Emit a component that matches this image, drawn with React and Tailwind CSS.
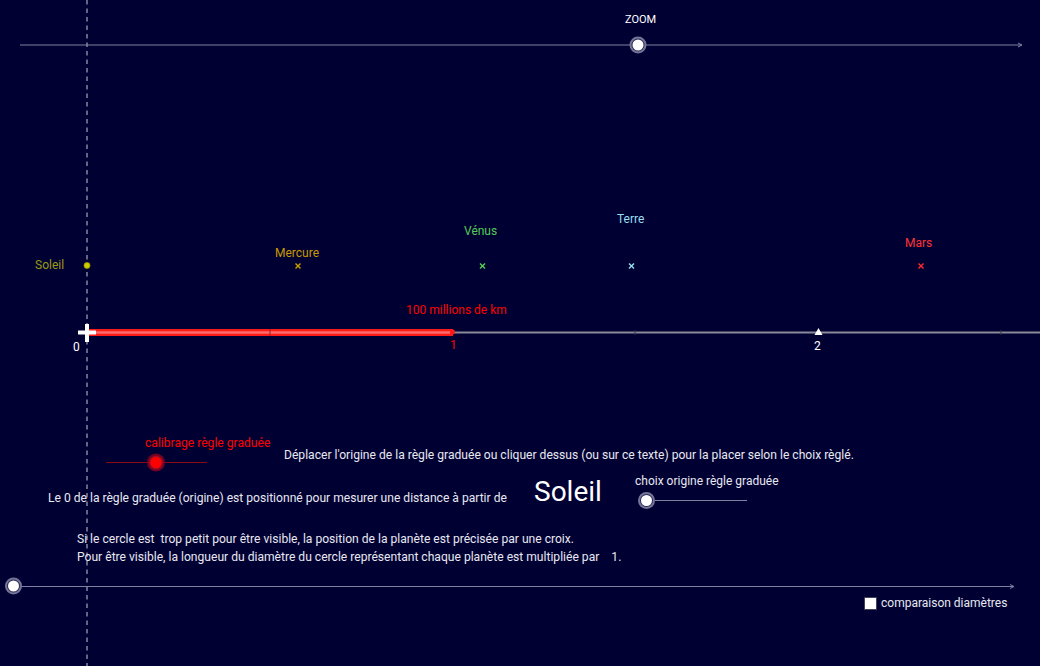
import React from "react";

function Knob({ cx, cy }) {
  return (
    <g>
      <circle cx={cx} cy={cy} r="8.5" fill="#75759a" />
      <circle cx={cx} cy={cy} r="6.5" fill="#2a2a55" />
      <circle cx={cx} cy={cy} r="5.5" fill="#ffffff" />
    </g>
  );
}

function Cross({ x, y, color }) {
  return (
    <g stroke={color} strokeWidth="1.4">
      <line x1={x - 2.5} y1={y - 2.5} x2={x + 2.5} y2={y + 2.5} />
      <line x1={x - 2.5} y1={y + 2.5} x2={x + 2.5} y2={y - 2.5} />
    </g>
  );
}

export default function App() {
  return (
    <div
      className="relative w-[1040px] h-[666px] overflow-hidden bg-[#000033] text-[12px] leading-[14px] text-[#e8e8f0]"
      style={{ fontFamily: "Roboto, 'Liberation Sans', sans-serif" }}
    >
      <svg className="absolute inset-0" width="1040" height="666" viewBox="0 0 1040 666">
        {/* dashed vertical line */}
        <line x1="87" y1="0" x2="87" y2="666" stroke="#c8c8d4" strokeWidth="1" strokeDasharray="4.5 4" />

        {/* top zoom slider */}
        <line x1="20" y1="45" x2="1022" y2="45" stroke="#8080a0" strokeWidth="1" />
        <path d="M1018 43 L1022 45 L1018 47" fill="none" stroke="#8080a0" strokeWidth="1" />
        <Knob cx={638} cy={45} />

        {/* Soleil point and planet crosses */}
        <circle cx="87" cy="265.5" r="3" fill="#cccc00" stroke="#9a9a00" strokeWidth="0.8" />
        <Cross x={298} y={266} color="#c89a00" />
        <Cross x={482.5} y={266} color="#55cc55" />
        <Cross x={631.5} y={266} color="#99ddee" />
        <Cross x={921} y={266} color="#ff2a2a" />

        {/* axis */}
        <line x1="87" y1="332.5" x2="1040" y2="332.5" stroke="#8a8a9a" strokeWidth="2" />
        <line x1="635" y1="330" x2="635" y2="335" stroke="#333344" strokeWidth="1" />
        <line x1="1001" y1="330" x2="1001" y2="335" stroke="#333344" strokeWidth="1" />
        <line x1="87" y1="332.5" x2="453" y2="332.5" stroke="#ff1a1a" strokeWidth="7" />
        <line x1="90" y1="332.5" x2="450" y2="332.5" stroke="#ff6a6a" strokeWidth="2.5" />
        <line x1="270" y1="329" x2="270" y2="336" stroke="#992222" strokeWidth="1" />
        <circle cx="452.5" cy="332" r="2.5" fill="#ff1a1a" />
        <path d="M814.5 335 L818.5 328 L822.5 335 Z" fill="#ffffff" />
        {/* origin cross */}
        <line x1="78" y1="332.5" x2="96" y2="332.5" stroke="#ffffff" strokeWidth="4" />
        <line x1="87" y1="324" x2="87" y2="342" stroke="#ffffff" strokeWidth="4" />

        {/* calibrage slider */}
        <line x1="106" y1="462.5" x2="207" y2="462.5" stroke="#8a0a14" strokeWidth="1" />
        <circle cx="156" cy="462.5" r="9" fill="#7a0020" />
        <circle cx="156" cy="462.5" r="6.8" fill="#a0102a" />
        <circle cx="156" cy="462.5" r="5.5" fill="#ff0000" />

        {/* choix origine slider */}
        <line x1="646" y1="500.5" x2="747" y2="500.5" stroke="#8080a0" strokeWidth="1" />
        <Knob cx={646.5} cy={500.5} />

        {/* bottom slider */}
        <line x1="13" y1="586.5" x2="1014" y2="586.5" stroke="#8080a0" strokeWidth="1" />
        <path d="M1010 584.5 L1014 586.5 L1010 588.5" fill="none" stroke="#8080a0" strokeWidth="1" />
        <Knob cx={13.5} cy={586} />
      </svg>

      {/* labels placed on the geometry canvas */}
      <div className="absolute left-[625px] top-[13px] text-[11px] text-white">ZOOM</div>
      <div className="absolute left-[35px] top-[258px] text-[#9a9a14]">Soleil</div>
      <div className="absolute left-[275px] top-[246px] text-[#c89a00]">Mercure</div>
      <div className="absolute left-[464px] top-[224px] text-[#55cc55]">Vénus</div>
      <div className="absolute left-[617px] top-[212px] text-[#99ddee]">Terre</div>
      <div className="absolute left-[905px] top-[236px] text-[#ff3333]">Mars</div>
      <div className="absolute left-[406px] top-[303px] text-[#ff0000]">100 millions de km</div>
      <div className="absolute left-[73px] top-[340px] text-white">0</div>
      <div className="absolute left-[450px] top-[338px] text-[#ff0000]">1</div>
      <div className="absolute left-[814px] top-[339px] text-white">2</div>

      <div className="absolute left-[145px] top-[436px] text-[12.1px] text-[#ff0000]">calibrage règle graduée</div>
      <div className="absolute left-[284px] top-[448px] text-[12.1px]">
        Déplacer l'origine de la règle graduée ou cliquer dessus (ou sur ce texte) pour la placer selon le choix règlé.
      </div>
      <div className="absolute left-[48px] top-[491px] text-[12.1px]">
        Le 0 de la règle graduée (origine) est positionné pour mesurer une distance à partir de
      </div>
      <div className="absolute left-[534px] top-[476px] text-[28px] leading-[32px] text-white">Soleil</div>
      <div className="absolute left-[635px] top-[474px]">choix origine règle graduée</div>
      <div className="absolute left-[77px] top-[532px] flex flex-col gap-[4px] text-[12.1px]">
        <span>Si le cercle est&nbsp; trop petit pour être visible, la position de la planète est précisée par une croix.</span>
        <span>Pour être visible, la longueur du diamètre du cercle représentant chaque planète est multipliée par&nbsp;&nbsp;&nbsp; 1.</span>
      </div>

      <label className="absolute left-[864px] top-[596px] flex items-center gap-[4px]">
        <span className="block w-[13px] h-[13px] bg-white border border-[#444455] rounded-[1px]" />
        <span className="text-[12px] leading-[14px] text-[#e8e8f0]">comparaison diamètres</span>
      </label>
    </div>
  );
}
